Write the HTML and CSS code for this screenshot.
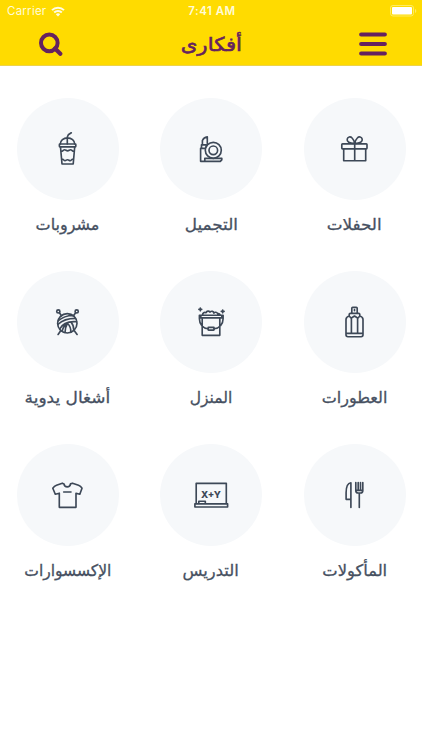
FILE: index.html
```html
<!DOCTYPE html>
<html lang="ar">
<head>
<meta charset="utf-8">
<title>أفكارى</title>
<link rel="stylesheet" href="styles.css">
</head>
<body>
<header class="header">
  <div class="status">
    <div class="carrier"><span>Carrier</span>
      <svg width="14" height="11" viewBox="0 0 14 11"><path d="M1 4.100a8.600 8.600 0 0 1 12 0M3.200 6.500a5.400 5.400 0 0 1 7.600 0" fill="none" stroke="#fffce5" stroke-width="2"/><path d="M4.800 8.300a3.200 3.200 0 0 1 4.400 0L7 10.500z" fill="#fffce5"/></svg>
    </div>
    <span class="time">7:41 AM</span>
    <svg class="battery" width="27" height="12" viewBox="0 0 27 12"><rect x=".5" y=".5" width="23" height="10.500" rx="2.500" fill="none" stroke="#ffec62"/><rect x="2" y="2" width="20" height="7.500" rx="1" fill="#fff"/><path d="M25 4v4q1.300-.5 1.300-2T25 4" fill="#ffec62"/></svg>
  </div>
  <nav class="bar">
    <svg class="search" width="24" height="24" viewBox="0 0 24 24" fill="none" stroke="#65225f"><circle cx="10.300" cy="10.900" r="8.300" stroke-width="4"/><path d="M16 16.500l5.300 5.300" stroke-width="4.200" stroke-linecap="round"/></svg>
    <h1 class="title"><span class="fit">أفكارى</span></h1>
    <svg class="menu" width="28" height="24" viewBox="0 0 28 24" stroke="#65225f" stroke-width="4" stroke-linecap="round"><path d="M2.100 2.500h23.800M2.100 12h23.800M2.100 21.500h23.800"/></svg>
  </nav>
</header>
<main class="grid">
  <section class="item"><div class="circle"><svg class="icon" viewBox="0.5 0 40 40"><path d="M12.800 15a7.200 6.200 0 0 1 14.400 0M19.800 15V8l1-2.200 3-2"/><rect x="11.900" y="15" width="16.400" height="2.800" rx=".6"/><path d="M13 18l1.500 17h11.200l1.500-17M13.600 22.500c2 0 2.300-1.800 3.500-1.800s1.600 1.100 3 1.100 1.800-1.100 3-1.100 1.500 1.800 3.500 1.800M14.400 30c1.700 0 1.900 1.700 3.100 1.700s1.400-1 2.600-1 1.500 1 2.600 1 1.400-1.700 3.100-1.700"/></svg></div><p class="label"><span class="fit drinks">مشروبات</span></p></section>
  <section class="item"><div class="circle"><svg class="icon" viewBox="0 0 40 40"><circle cx="22.300" cy="21.300" r="8"/><circle cx="22.300" cy="21.300" r="4.300"/><path d="M14 32.300H9.600V19.400h4.800M10.500 19.400v-3.600h4.800v2M11.400 15.800v-4.300q1.400-3 4.900-3.600v6.700M13.800 29.300h17v1.500l-1.500 1.500H13.800z"/></svg></div><p class="label"><span class="fit beauty">التجميل</span></p></section>
  <section class="item"><div class="circle"><svg class="icon" viewBox="0.5 0 40 40"><rect x="7.300" y="14.800" width="25.200" height="5" rx=".7"/><path d="M9.200 20v11.700h22V20M20.200 14.800v16.900M20.200 14.500c-5.500 0-8-1.800-7.500-4.300.5-2.400 3.200-3 4.900-1.200 1.200 1.200 2 3 2.600 5.500zc5.500 0 8-1.800 7.500-4.300-.5-2.400-3.200-3-4.900-1.200-1.200 1.200-2 3-2.600 5.500z"/></svg></div><p class="label"><span class="fit parties">الحفلات</span></p></section>

  <section class="item"><div class="circle"><svg class="icon" viewBox="0.5 0 40 40"><circle cx="19.800" cy="21.300" r="9.700"/><circle cx="10.800" cy="9.400" r="1.600"/><circle cx="29.200" cy="9.400" r="1.600"/><path d="M11.900 10.800l2.100 3M28.100 10.800l-2.100 3M13 29l-2.400 3.500M27 29l2.600 3.500M10.500 19c4-3.500 9.500-5.500 15-5.500M10.300 22.500c4.800-4.600 11-6.200 17.600-6.200M12.200 27c2.800-5.500 8.300-8 16.900-7.300M14.600 29.300c.8-4 2.700-6.400 5.400-8.100M17.500 30.500c.1-3.500.8-6.500 2.500-9.300 2.400 2.500 3.500 5.500 3.300 9M23.500 20c2.100 2.600 2.900 5.400 2.800 8.500"/></svg></div><p class="label"><span class="fit crafts">أشغال يدوية</span></p></section>
  <section class="item"><div class="circle"><svg class="icon" viewBox="0 0 40 40"><path d="M9.800 13.200h21v2.700h-21zM11.200 16v17.300h17.600V16M10.800 13.200H8.400v3.600c0 5.600 3.600 9.600 8.800 10M29.800 13.200h2.300v3.600c0 5.600-3.700 9.600-9.200 10M11.500 13c0-2.200 1.900-3.200 3.600-2.300.8-1.900 2.900-2 3.800-.6 1.600-1.400 3.700-1 4 1 .9-1.300 3.200-1.200 3.800.7 1.500-.4 2.300.2 2.500 1.200"/><rect x="17.100" y="25.400" width="6" height="2.700" rx=".5"/><path d="M9.300 6v2.800M7.900 7.400h2.800M31.700 8v2.800M30.300 9.400h2.800"/></svg></div><p class="label"><span class="fit home">المنزل</span></p></section>
  <section class="item"><div class="circle"><svg class="icon" viewBox="0.5 0 40 40"><path d="M17.300 11.300V6.200q0-.9.900-.9h3.600q.9 0 .9.900v5.100M20 7.500v1.200M14.700 14v-1.500q0-1.200 1.200-1.200h8.200q1.200 0 1.200 1.200V14M16.900 31V16.500L14.700 14q-3.200 1-3.200 3.500v15.300q0 1.900 1.900 1.900h13.200q1.900 0 1.900-1.900V17.500q0-2.500-3.200-3.500l-2.200 2.500V31M16.900 16l3.100-2 3.100 2M11.500 31.300h17"/></svg></div><p class="label"><span class="fit perfume">العطورات</span></p></section>

  <section class="item"><div class="circle"><svg class="icon" viewBox="0.5 0 40 40"><path d="M14.800 8.200L9 10.200q-2.200.8-3.700 3l2.500 6 4-1v14.100h16.700V18.200l3.800 1 2.200-6q-1.300-2.200-3.500-3l-6-2-2 .7c-.5 4-6 4-6.500 0zM16.200 17h7.300"/></svg></div><p class="label"><span class="fit accessories">الإكسسوارات</span></p></section>
  <section class="item"><div class="circle"><svg class="icon" viewBox="0 0 40 40"><path d="M5.200 28.700V8.300h30.100v20.400M3.900 28.800h32.700V32H3.900zM7.800 28.700v-2.500h6.500v2.500"/><text x="20" y="23" class="formula">X+Y</text></svg></div><p class="label"><span class="fit teaching">التدريس</span></p></section>
  <section class="item"><div class="circle"><svg class="icon" viewBox="0.5 0 40 40"><path d="M16.400 32.500V7.700c-3.200.4-4.800 5-4.800 10v6.600h4.800M21.300 7.500v8.200q0 2.300 2.300 2.300H26q2.300 0 2.300-2.300V7.500M23.700 7.500v7.600M26 7.500v7.600M21.300 15.300h7M24.800 18v14.500"/></svg></div><p class="label"><span class="fit food">المأكولات</span></p></section>
</main>
</body>
</html>
```
FILE: styles.css
```css
* { box-sizing: border-box; }
body { margin: 0; background: #fff; color: #465061; font-family: "DejaVu Sans", sans-serif; height: 750px; }
.header { height: 66px; background: #ffdb00; border-bottom: 1px solid #ecd34c; }
.status { height: 22px; display: grid; grid-template-columns: 1fr auto 1fr; align-items: center; padding: 0 5px 0 7px; color: #fffbd8; font: 11.5px/22px Inter, sans-serif; }
.carrier { display: flex; align-items: center; gap: 5px; letter-spacing: .25px; }
.time { font-weight: 600; font-size: 11.5px; letter-spacing: .5px; }
.battery { justify-self: end; }
.bar { height: 43px; display: grid; grid-template-columns: 1fr auto 1fr; align-items: center; padding: 0 35px 0 39px; }
.menu { justify-self: end; }
.title { margin: 0 4px 0 0; font-size: 19px; font-weight: 400; line-height: 28px; color: #65225f; -webkit-text-stroke: .6px #65225f; }
.title .fit { transform: scaleX(1.12); }
.fit { display: inline-block; white-space: nowrap; }
.grid { display: grid; grid-template-columns: repeat(3, 102px); column-gap: 41.5px; grid-auto-rows: 173px; padding: 32px 0 0 16.5px; }
.item { display: flex; flex-direction: column; align-items: center; }
.circle { width: 102px; height: 102px; border-radius: 50%; background: #f6f8fa; display: grid; place-items: center; }
.icon { width: 40px; height: 40px; fill: none; stroke: #3d4857; stroke-width: 1.65; stroke-linejoin: round; stroke-linecap: round; overflow: visible; }
.formula { font: 800 9.5px Inter, sans-serif; text-anchor: middle; fill: #3d4857; stroke: none; }
.label { margin: 12px 0 0; font-size: 16px; line-height: 26px; -webkit-text-stroke: .3px #465061; }
.beauty, .parties { transform: scaleX(1.05); }
.crafts { transform: scaleX(1.06); }
.home { transform: scaleX(.97); }
.accessories { transform: scaleX(.97); }
.teaching, .food { transform: scaleX(1.02); }
```
